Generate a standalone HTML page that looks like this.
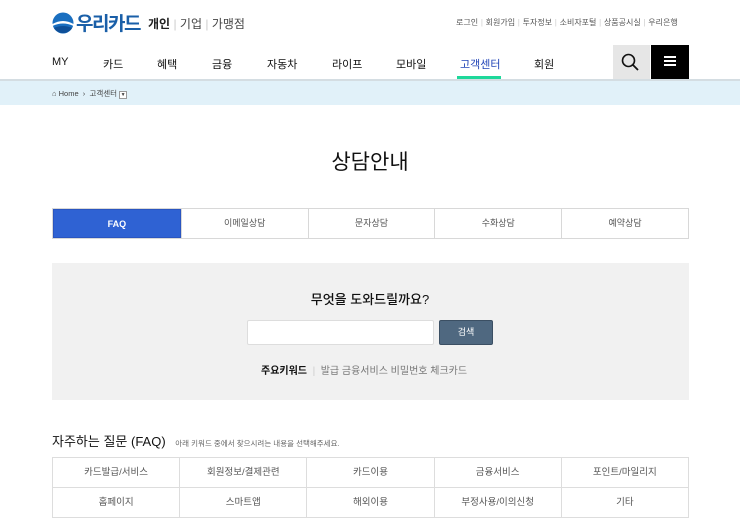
<!DOCTYPE html>
<html><head><meta charset="utf-8"><style>
*{margin:0;padding:0;box-sizing:border-box}
body{width:740px;height:508px;overflow:hidden;background:#fff;font-family:"Liberation Sans","Noto Sans CJK KR",sans-serif;color:#222;position:relative}
.a{position:absolute}
.top a{color:#555;font-size:8px}
.nav span{position:absolute;top:56px;font-size:11px;color:#111}
.tabs{left:52px;top:208px;width:637px;height:31px;display:flex;border:1px solid #d8d8d8}
.tabs div{flex:1;text-align:center;line-height:29px;font-size:9px;color:#555;border-left:1px solid #d8d8d8}
.tabs div:first-child{border-left:none;background:#2f62d3;color:#fff;font-weight:bold;border:1px solid #2a55c0}
.grid{left:52px;top:457px;width:637px;border-top:1px solid #ddd;border-left:1px solid #ddd}
.grid div{float:left;width:20%;height:30px;border-right:1px solid #ddd;border-bottom:1px solid #ddd;text-align:center;line-height:30px;font-size:9.5px;color:#555}
</style></head><body>
<svg class="a" style="left:52px;top:12px" width="22" height="22" viewBox="0 0 22 22"><circle cx="11" cy="11" r="10.5" fill="#1a6fc0"/><path d="M0.5 12 Q11 6 21.5 12 L21.5 14 Q11 9 0.5 14Z" fill="#fff"/><path d="M2 16 Q11 12 20 16 A10.5 10.5 0 0 1 2 16Z" fill="#0e4f98"/></svg>
<div class="a" style="left:76px;top:9px;font-size:19px;font-weight:bold;color:#1a5fa8;letter-spacing:-1.5px">우리카드</div>
<div class="a" style="left:148px;top:15px;font-size:12px"><b>개인</b> <span style="color:#ccc">|</span> <span style="color:#444">기업</span> <span style="color:#ccc">|</span> <span style="color:#444">가맹점</span></div>
<div class="a top" style="left:456px;top:17px;font-size:8px;color:#ccc;white-space:nowrap;word-spacing:0.5px"><a>로그인</a> | <a>회원가입</a> | <a>투자정보</a> | <a>소비자포털</a> | <a>상품공시실</a> | <a>우리은행</a></div>
<div class="nav"><span style="left:52px">MY</span><span style="left:103px">카드</span><span style="left:157px">혜택</span><span style="left:212px">금융</span><span style="left:267px">자동차</span><span style="left:332px">라이프</span><span style="left:396px">모바일</span><span style="left:460px;color:#2346b8">고객센터</span><span style="left:534px">회원</span></div>
<div class="a" style="left:457px;top:76px;width:44px;height:3px;background:#1ed89a"></div>
<div class="a" style="left:613px;top:45px;width:37px;height:34px;background:#e6e6e6"></div>
<svg class="a" style="left:621px;top:53px" width="18" height="18"><circle cx="7.5" cy="7.5" r="6" fill="none" stroke="#111" stroke-width="1.6"/><line x1="12" y1="12" x2="17" y2="17" stroke="#111" stroke-width="1.8"/></svg>
<div class="a" style="left:651px;top:45px;width:38px;height:34px;background:#000"></div>
<div class="a" style="left:664px;top:56px;width:12px;height:10px;border-top:2px solid #fff;border-bottom:2px solid #fff"></div>
<div class="a" style="left:664px;top:60px;width:12px;height:2px;background:#fff"></div>
<div class="a" style="left:0;top:79px;width:740px;height:2px;background:#d4dde2"></div>
<div class="a" style="left:0;top:81px;width:740px;height:24px;background:#e1f1f9"></div>
<div class="a" style="left:52px;top:88px;font-size:7.5px;color:#444">⌂ Home &nbsp;›&nbsp; 고객센터 <span style="display:inline-block;width:8px;height:8px;border:1px solid #999;background:#fff;font-size:5px;line-height:6px;text-align:center">▼</span></div>
<div class="a" style="left:0;top:146px;width:740px;text-align:center;font-size:21px;color:#111">상담안내</div>
<div class="a tabs"><div>FAQ</div><div>이메일상담</div><div>문자상담</div><div>수화상담</div><div>예약상담</div></div>
<div class="a" style="left:52px;top:263px;width:637px;height:137px;background:#f1f1f1"></div>
<div class="a" style="left:0;top:289px;width:740px;text-align:center;font-size:13px;color:#111;font-weight:500">무엇을 도와드릴까요?</div>
<div class="a" style="left:247px;top:320px;width:187px;height:25px;background:#fff;border:1px solid #ddd;border-radius:2px"></div>
<div class="a" style="left:439px;top:320px;width:54px;height:25px;background:#4f6880;border:1px solid #3b4f63;border-radius:2px;color:#fff;font-size:9px;text-align:center;line-height:23px">검색</div>
<div class="a" style="left:261px;top:362px;font-size:10px;color:#777;white-space:nowrap"><b style="color:#111">주요키워드</b> &nbsp;<span style="color:#ccc">|</span>&nbsp; 발급 금융서비스 비밀번호 체크카드</div>
<div class="a" style="left:52px;top:431px;font-size:13px;color:#111;white-space:nowrap">자주하는 질문 (FAQ) <span style="font-size:7.5px;color:#666;margin-left:6px">아래 키워드 중에서 찾으시려는 내용을 선택해주세요.</span></div>
<div class="a grid"><div>카드발급/서비스</div><div>회원정보/결제관련</div><div>카드이용</div><div>금융서비스</div><div>포인트/마일리지</div><div>홈페이지</div><div>스마트앱</div><div>해외이용</div><div>부정사용/이의신청</div><div>기타</div></div>
</body></html>
